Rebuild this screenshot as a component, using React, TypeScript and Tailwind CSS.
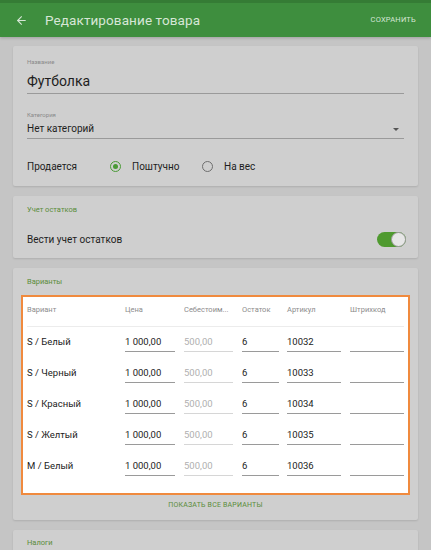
import { ArrowLeft } from "lucide-react";

const rows = [
  { name: "S / Белый", sku: "10032" },
  { name: "S / Черный", sku: "10033" },
  { name: "S / Красный", sku: "10034" },
  { name: "S / Желтый", sku: "10035" },
  { name: "M / Белый", sku: "10036" },
];

const Card = ({ children, className = "" }: { children: React.ReactNode; className?: string }) => (
  <div className={"bg-[#cfcfcf] rounded-[2px] shadow-[0_1px_2px_rgba(0,0,0,0.12)] px-[14px] " + className}>
    {children}
  </div>
);

const Field = ({ value, width, muted = false }: { value: string; width: string; muted?: boolean }) => (
  <div
    className={
      "h-[20px] flex items-center border-b " +
      width +
      (muted ? " border-[#d6d6d6] text-[#b0b0b0]" : " border-[#9a9a9a] text-[#222]")
    }
  >
    <span className="text-[9.5px] leading-none">{value}</span>
  </div>
);

export default function App() {
  return (
    <div className="w-[431px] h-[550px] overflow-hidden bg-[#c5c5c5] font-['Roboto',sans-serif]">
      <div className="h-[37px] bg-[#3e8e3e] border-t-[3px] border-[#357c35] flex items-center px-[15px] shadow-[0_1px_3px_rgba(0,0,0,0.2)]">
        <ArrowLeft size={13} strokeWidth={2} className="text-[#d6e6d6]" />
        <span className="ml-[17px] text-[13.5px] text-[#d6e6d6] tracking-[0.1px]">Редактирование товара</span>
        <span className="ml-auto text-[7.5px] text-[#d6e6d6] tracking-[0.2px]">СОХРАНИТЬ</span>
      </div>

      <div className="flex flex-col gap-[10px] px-[13px] pt-[9px]">
        <Card className="pt-[12px] pb-[10px]">
          <div className="text-[6px] leading-[8px] text-[#8a8a8a]">Название</div>
          <div className="mt-[6px] h-[22px] border-b border-[#9a9a9a] flex items-start">
            <span className="text-[14px] leading-[18px] text-[#1e1e1e]">Футболка</span>
          </div>
          <div className="mt-[17px] text-[6px] leading-[8px] text-[#8a8a8a]">Категория</div>
          <div className="mt-[3px] pb-[2px] border-b border-[#9a9a9a] flex items-center justify-between">
            <span className="text-[10px] leading-[14px] text-[#1e1e1e]">Нет категорий</span>
            <span className="mr-[5px] w-0 h-0 border-l-[3.5px] border-r-[3.5px] border-t-[3.5px] border-l-transparent border-r-transparent border-t-[#555]" />
          </div>
          <div className="mt-[17px] h-[20px] flex items-center text-[10px] text-[#1e1e1e]">
            <span className="w-[83px]">Продается</span>
            <span className="w-[22px] flex items-center">
              <span className="w-[11px] h-[11px] rounded-full border-[1.5px] border-[#4a9a36] flex items-center justify-center">
                <span className="w-[5px] h-[5px] rounded-full bg-[#4a9a36]" />
              </span>
            </span>
            <span className="w-[70px]">Поштучно</span>
            <span className="w-[22px] flex items-center">
              <span className="w-[11px] h-[11px] rounded-full border-[1.5px] border-[#6e6e6e]" />
            </span>
            <span>На вес</span>
          </div>
        </Card>

        <Card className="pt-[9px] pb-[9px]">
          <div className="text-[7.5px] leading-[10px] text-[#5a8c3a]">Учет остатков</div>
          <div className="mt-[14px] h-[20px] flex items-center justify-between">
            <span className="text-[10px] text-[#1e1e1e]">Вести учет остатков</span>
            <span className="mr-[-2px] w-[29px] h-[15px] rounded-full bg-[#4f9a2f] flex items-center justify-end">
              <span className="w-[15px] h-[15px] rounded-full bg-[#e6e6e6] border border-[#9a9a9a]" />
            </span>
          </div>
        </Card>

        <Card className="pt-[9px] pb-[10px]">
          <div className="text-[7.5px] leading-[10px] text-[#5a8c3a]">Варианты</div>
          <div className="mt-[8px] -ml-[6px] -mr-[6px] bg-white border-2 border-[#f08a3e] px-[4px] pb-[11px]">
            <div className="h-[30px] flex items-center border-b border-[#ececec] text-[7.5px] text-[#8c8c8c] pb-[3px]">
              <span className="w-[98px]">Вариант</span>
              <span className="w-[59px]">Цена</span>
              <span className="w-[58px] pr-[4px] whitespace-nowrap overflow-hidden">Себестоим...</span>
              <span className="w-[45px]">Остаток</span>
              <span className="w-[63px]">Артикул</span>
              <span>Штрихкод</span>
            </div>
            {rows.map((r) => (
              <div key={r.sku} className="h-[31px] flex items-start pt-[5px]">
                <div className="w-[98px] h-[20px] flex items-center text-[9.5px] text-[#222]">{r.name}</div>
                <div className="w-[59px]">
                  <Field value="1 000,00" width="w-[50px]" />
                </div>
                <div className="w-[58px]">
                  <Field value="500,00" width="w-[49px]" muted />
                </div>
                <div className="w-[45px]">
                  <Field value="6" width="w-[37px]" />
                </div>
                <div className="w-[63px]">
                  <Field value={r.sku} width="w-[54px]" />
                </div>
                <Field value="" width="w-[54px]" />
              </div>
            ))}
          </div>
          <div className="mt-[5px] text-center text-[7px] leading-[10px] text-[#5a8c3a] tracking-[0.2px]">
            ПОКАЗАТЬ ВСЕ ВАРИАНТЫ
          </div>
        </Card>

        <Card className="pt-[8px] pb-[20px]">
          <div className="text-[7.5px] leading-[10px] text-[#5a8c3a]">Налоги</div>
        </Card>
      </div>
    </div>
  );
}
